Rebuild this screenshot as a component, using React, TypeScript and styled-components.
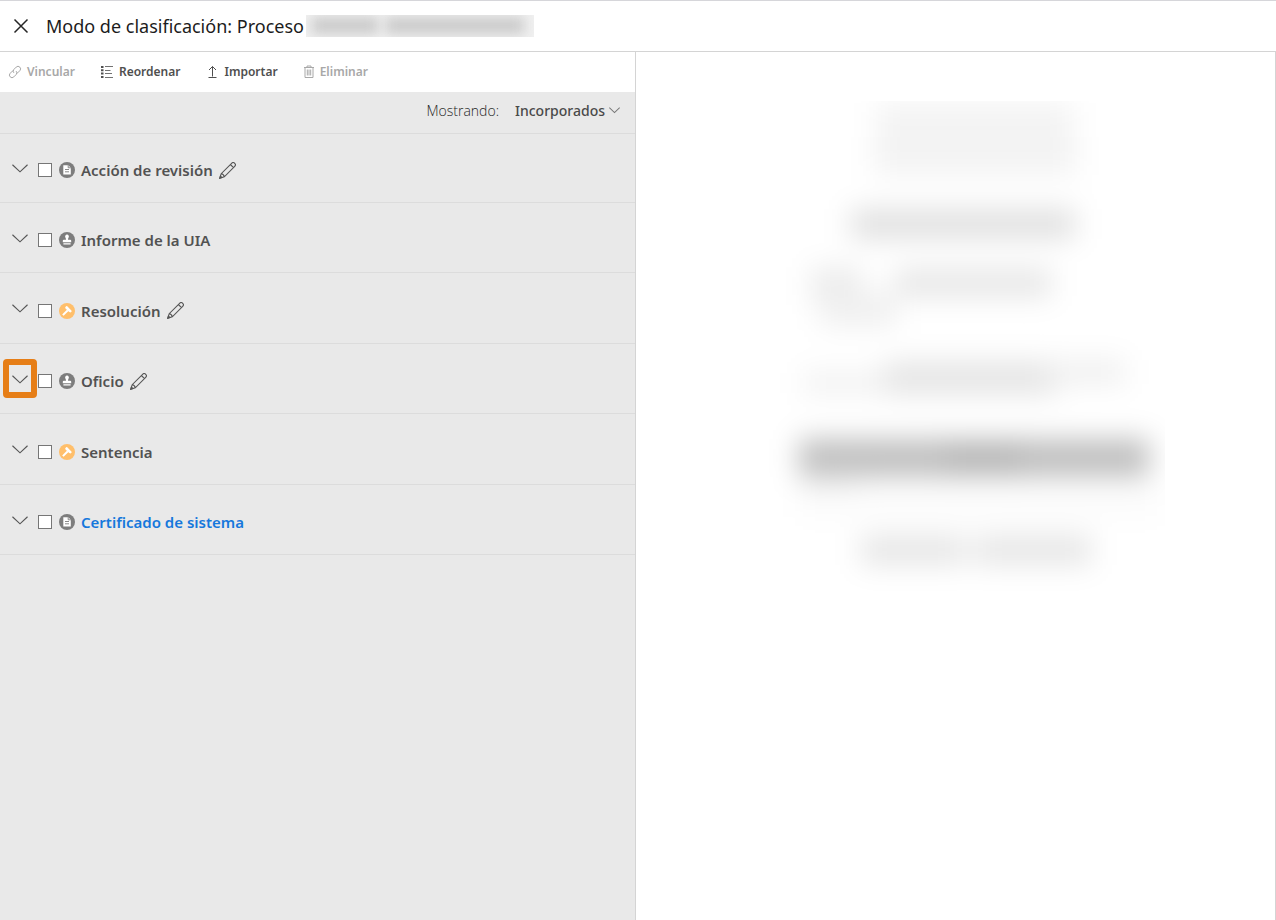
import React from "react";
import styled, { createGlobalStyle } from "styled-components";

const GlobalStyle = createGlobalStyle`
  *, *::before, *::after { box-sizing: border-box; }
  html, body, #root { height: 100%; }
  body {
    margin: 0;
    background: #fff;
    color: #4a4a4a;
    font-family: "Noto Sans", "Open Sans", "Liberation Sans", sans-serif;
  }
  button, select, input { font: inherit; color: inherit; margin: 0; }
  h1, ul { margin: 0; padding: 0; }
`;

const Page = styled.div`
  display: flex;
  flex-direction: column;
  min-height: 100%;
  border-top: 1px solid #d6d6da;
`;

const Header = styled.header`
  display: flex;
  align-items: center;
  height: 51px;
  padding: 0 12px;
  border-bottom: 1px solid #d4d4d4;
`;

const IconButton = styled.button`
  display: flex;
  align-items: center;
  justify-content: center;
  padding: 0;
  border: 0;
  background: none;
  cursor: pointer;
`;

const CloseButton = styled(IconButton)`
  width: 18px;
  height: 32px;
  margin-right: 16px;
  color: #262626;
`;

const Title = styled.h1`
  font-size: 18px;
  line-height: 24px;
  font-weight: 400;
  color: #1c1c1c;
  white-space: nowrap;
`;

const Redacted = styled.svg`
  display: block;
  margin-left: 2px;
`;

const Body = styled.div`
  display: flex;
  flex: 1;
`;

const ListPanel = styled.section`
  display: flex;
  flex-direction: column;
  flex: 0 0 calc(50% - 2px);
  min-width: 0;
  background: #e9e9e9;
  border-right: 1px solid #d4d4d4;
`;

const Toolbar = styled.div`
  display: flex;
  align-items: center;
  gap: 25px;
  height: 40px;
  padding: 0 8px;
  background: #fff;
`;

const ToolButton = styled.button`
  display: flex;
  align-items: center;
  gap: 5px;
  padding: 0;
  border: 0;
  background: none;
  font-size: 12px;
  line-height: 16px;
  font-weight: 600;
  color: #4f4f4f;
  cursor: pointer;

  &:disabled {
    color: #a8a8a8;
    cursor: default;
  }
`;

const FilterBar = styled.div`
  display: flex;
  align-items: center;
  justify-content: flex-end;
  gap: 16px;
  height: 42px;
  padding: 0 15px 4px 0;
  border-bottom: 1px solid #dcdcdc;
  font-size: 14px;
  line-height: 20px;
`;

const FilterLabel = styled.label`
  font-family: "Open Sans", "Noto Sans", sans-serif;
  font-weight: 300;
  color: #262626;
`;

const SelectWrap = styled.span`
  display: flex;
  align-items: center;
  gap: 3px;
  color: #777;
`;

const FilterSelect = styled.select`
  appearance: none;
  padding: 0;
  border: 0;
  background: none;
  font-size: 14px;
  line-height: 20px;
  font-weight: 500;
  color: #4a4a4a;
`;

const List = styled.ul`
  list-style: none;
  margin-top: -1px;
`;

const Row = styled.li`
  display: flex;
  align-items: center;
  height: 70px;
  padding: 5px 3px 0;
  border-bottom: 1px solid #dcdcdc;

  &:nth-child(2n + 3) {
    height: 71px;
  }
`;

const Expander = styled(IconButton)<{ $highlighted?: boolean }>`
  position: relative;
  width: 34px;
  height: 38px;
  padding-bottom: 4px;
  color: #555;

  &::after {
    content: "";
    display: ${(p) => (p.$highlighted ? "block" : "none")};
    position: absolute;
    inset: -3px 0 2px;
    border: 6px solid #e67e17;
    border-radius: 4px;
  }
`;

const Check = styled.input`
  appearance: none;
  width: 14px;
  height: 14px;
  margin: 0 7px 0 1px;
  border: 1px solid #767676;
  background: #fff;
`;

const RowLabel = styled.label<{ $link?: boolean }>`
  margin: 0 6px;
  font-size: 15px;
  line-height: 20px;
  font-weight: 600;
  color: ${(p) => (p.$link ? "#1678dc" : "#525252")};
`;

const Preview = styled.main`
  flex: 1 1 0;
  min-width: 0;
  display: flex;
  justify-content: center;
  align-items: flex-start;
  padding: 49px 0 0 18px;
  background: #fff;
  border-right: 1px solid #d4d4d4;
`;

const Chevron = ({ size }: { size: number }) => (
  <svg width={size} height={size / 2 + 1} viewBox="0 0 17 9" fill="none" stroke="currentColor" strokeWidth={size > 12 ? 1.2 : 1.6}>
    <path d="M.5 .5 8.5 8 16.5 .5" />
  </svg>
);

const CloseIcon = () => (
  <svg width="16" height="16" viewBox="0 0 16 16" fill="none" stroke="currentColor" strokeWidth="1.5">
    <path d="M1.500 1.500l13 13M14.500 1.500l-13 13" />
  </svg>
);

const LinkIcon = () => (
  <svg width="14" height="14" viewBox="0 0 14 14" fill="none" stroke="currentColor" strokeWidth="1">
    <path d="M5.900 7.900a2.500 2.500 0 0 1 0-3.500l2.300-2.300a2.500 2.500 0 0 1 3.600 3.600L9.600 7.900a2.500 2.500 0 0 1-1.200.7" />
    <path d="M8.100 6.100a2.500 2.500 0 0 1 0 3.500l-2.300 2.300a2.500 2.500 0 0 1-3.600-3.600L4.400 6.100a2.500 2.500 0 0 1 1.200-.7" />
  </svg>
);

const ReorderIcon = () => (
  <svg width="14" height="14" viewBox="0 0 14 14" fill="none" stroke="currentColor">
    <path d="M1 2h2.500M1 5.300h2.500M1 8.600h2.500M1 12h2.500" strokeWidth="2" />
    <path d="M5 1.500h8M5 5.500h5.500M5 8.500h7M5 12.500h8" strokeWidth="1" opacity=".8" />
  </svg>
);

const ImportIcon = () => (
  <svg width="14" height="14" viewBox="0 0 14 14" fill="none" stroke="currentColor" strokeWidth="1">
    <path d="M7.500 1.500v10M4 5l3.500-3.500L11 5M3.500 12.500h8" />
  </svg>
);

const TrashIcon = () => (
  <svg width="12" height="14" viewBox="0 0 12 14" fill="none" stroke="currentColor" strokeWidth="1">
    <path d="M1 2.500h10M4 2.500v-1.500h4v1.500M2 2.500v10h8v-10M4.300 4.500v6M6 4.500v6M7.700 4.500v6" />
  </svg>
);

const PencilIcon = () => (
  <svg width="17" height="17" viewBox="0 0 17 17" fill="none" stroke="#555" strokeWidth="1.1">
    <path d="M.8 16.200l1.400-4.500L12.600 1.300a1.900 1.900 0 0 1 3.100 3.100L5.300 14.800zM11.400 2.500l3.100 3.100M2.200 11.700q2.500.2 3.100 3.100" />
    <path d="M.8 16.200l.6-2.100 1.500 1.500z" fill="#555" />
  </svg>
);

type Kind = "document" | "stamp" | "gavel";

const Badge = ({ kind }: { kind: Kind }) => (
  <svg width="16" height="16" viewBox="0 0 16 16">
    <circle cx="8" cy="8" r="8" fill={kind === "gavel" ? "#ffbf6b" : "#7d7d7d"} />
    {kind === "document" && (
      <>
        <path d="M4.300 3.200h5l2.500 2.500v6.800H4.300z" fill="#fff" />
        <path d="M9.200 3.200v2.600h2.600M6 7.500h4M6 9.800h4" stroke="#7d7d7d" strokeWidth=".9" fill="none" />
      </>
    )}
    {kind === "stamp" && (
      <path
        d="M8 2.500a1.900 1.900 0 0 1 1.700 2.700C9.200 6.100 9 6.700 9 7.800h2.200a1 1 0 0 1 1 1v1.400H3.800V8.800a1 1 0 0 1 1-1H7c0-1.100-.2-1.700-.7-2.600A1.900 1.900 0 0 1 8 2.500zM4.400 11.200h7.200v1.200H4.400z"
        fill="#fff"
      />
    )}
    {kind === "gavel" && (
      <>
        <path d="M3.900 12.100 8.800 7.200" stroke="#fff" strokeWidth="2" />
        <path d="M7 3.300l1-.2 4.600 4.600-.1 1.100-1 .7-1.200-.4L6.700 5.700l-.4-1.200z" fill="#fff" />
      </>
    )}
  </svg>
);

const rows: { id: string; name: string; kind: Kind; editable?: boolean; highlighted?: boolean; link?: boolean }[] = [
  { id: "accion", name: "Acción de revisión", kind: "document", editable: true },
  { id: "informe", name: "Informe de la UIA", kind: "stamp" },
  { id: "resolucion", name: "Resolución", kind: "gavel", editable: true },
  { id: "oficio", name: "Oficio", kind: "stamp", editable: true, highlighted: true },
  { id: "sentencia", name: "Sentencia", kind: "gavel" },
  { id: "certificado", name: "Certificado de sistema", kind: "document", link: true },
];

/* Each smudge of the hidden document: x, y, width, height, grey level. */
const smudges: [number, number, number, number, string][] = [
  [92, 2, 196, 34, "#f3f3f3"],
  [89, 36, 202, 38, "#f3f3f3"],
  [66, 108, 224, 30, "#e0e0e0"],
  [26, 166, 52, 38, "#ececec"],
  [36, 192, 76, 34, "#f0f0f0"],
  [110, 168, 156, 28, "#e6e6e6"],
  [18, 270, 82, 24, "#f2f2f2"],
  [100, 260, 172, 34, "#e5e5e5"],
  [262, 258, 78, 26, "#f0f0f0"],
  [14, 338, 350, 38, "#bfbfbf"],
  [16, 372, 56, 12, "#e2e2e2"],
  [160, 342, 76, 30, "#b6b6b6"],
  [14, 388, 362, 28, "#fbfbfb"],
  [76, 434, 100, 30, "#e6e6e6"],
  [176, 434, 20, 30, "#f3f3f3"],
  [194, 434, 112, 30, "#e6e6e6"],
];

const HiddenDocument = () => (
  <svg width="400" height="500" viewBox="-20 0 400 500" role="img" aria-label="Documento">
    <defs>
      <filter id="soft" x="-100" y="-60" width="600" height="640" filterUnits="userSpaceOnUse" colorInterpolationFilters="sRGB">
        <feGaussianBlur stdDeviation="14" />
      </filter>
    </defs>
    <g filter="url(#soft)">
      {/* White paper keeps the blur from turning transparent edges grey. */}
      <rect x="-100" y="-60" width="600" height="640" fill="#fff" />
      {smudges.map(([x, y, w, h, fill]) => (
        <rect key={`${x}-${y}`} x={x} y={y} width={w} height={h} fill={fill} />
      ))}
    </g>
  </svg>
);

const HiddenNumber = () => (
  <Redacted width="228" height="22" viewBox="0 0 228 22" aria-hidden="true">
    <defs>
      <filter id="softNumber" x="-20" y="-20" width="270" height="62" filterUnits="userSpaceOnUse" colorInterpolationFilters="sRGB">
        <feGaussianBlur stdDeviation="6" />
      </filter>
    </defs>
    <rect width="228" height="22" fill="#f0f0f0" />
    <g filter="url(#softNumber)" fill="#cccccc">
      <rect x="6" y="2" width="66" height="17" />
      <rect x="80" y="2" width="138" height="17" />
    </g>
  </Redacted>
);

export default function App() {
  return (
    <>
      <GlobalStyle />
      <Page>
        <Header>
          <CloseButton aria-label="Cerrar">
            <CloseIcon />
          </CloseButton>
          <Title>Modo de clasificación: Proceso</Title>
          <HiddenNumber />
        </Header>
        <Body>
          <ListPanel>
            <Toolbar>
              <ToolButton disabled><LinkIcon />Vincular</ToolButton>
              <ToolButton><ReorderIcon />Reordenar</ToolButton>
              <ToolButton><ImportIcon />Importar</ToolButton>
              <ToolButton disabled><TrashIcon />Eliminar</ToolButton>
            </Toolbar>
            <FilterBar>
              <FilterLabel htmlFor="filter">Mostrando:</FilterLabel>
              <SelectWrap>
                <FilterSelect id="filter" defaultValue="Incorporados">
                  <option>Incorporados</option>
                </FilterSelect>
                <Chevron size={11} />
              </SelectWrap>
            </FilterBar>
            <List>
              {rows.map((row) => (
                <Row key={row.id}>
                  <Expander $highlighted={row.highlighted} aria-label={`Expandir ${row.name}`}>
                    <Chevron size={16} />
                  </Expander>
                  <Check type="checkbox" id={row.id} />
                  <Badge kind={row.kind} />
                  <RowLabel htmlFor={row.id} $link={row.link}>{row.name}</RowLabel>
                  {row.editable && (
                    <IconButton aria-label={`Editar ${row.name}`}>
                      <PencilIcon />
                    </IconButton>
                  )}
                </Row>
              ))}
            </List>
          </ListPanel>
          <Preview>
            <HiddenDocument />
          </Preview>
        </Body>
      </Page>
    </>
  );
}
